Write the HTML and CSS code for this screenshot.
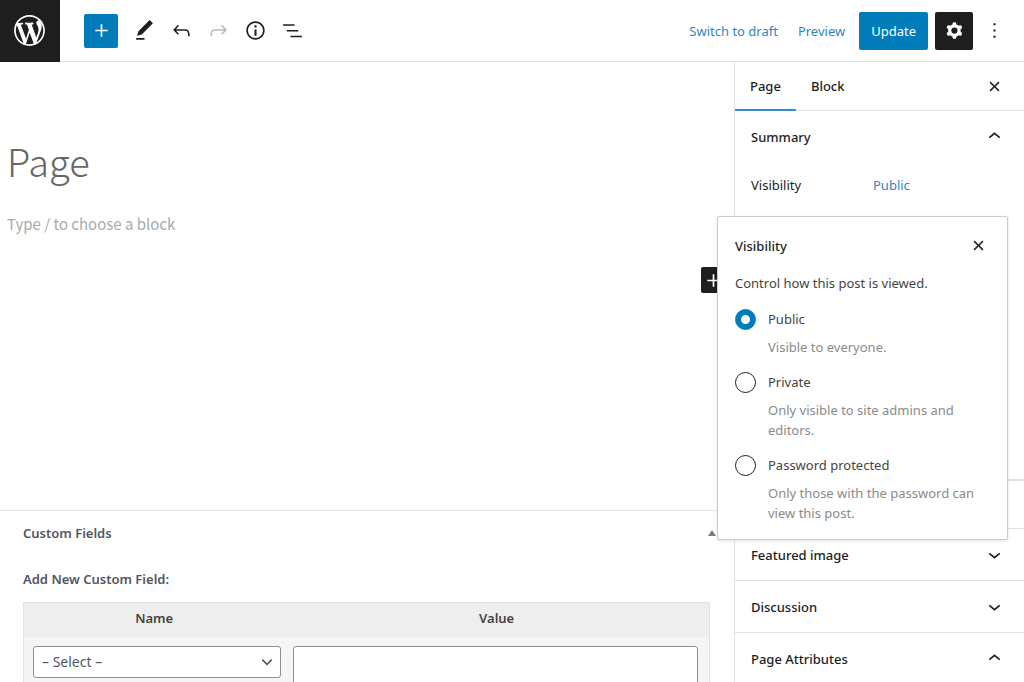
FILE: index.html
```
<!DOCTYPE html>
<html lang="en">
<head>
<meta charset="utf-8">
<meta name="viewport" content="width=device-width, initial-scale=1">
<title>Edit Page</title>
<link rel="stylesheet" href="styles.css">
</head>
<body>
<svg class="defs" aria-hidden="true">
  <symbol id="plus" viewBox="0 0 24 24"><path d="M18 11.2h-5.2V6h-1.6v5.2H6v1.6h5.2V18h1.6v-5.2H18z"/></symbol>
  <symbol id="close" viewBox="0 0 24 24"><path d="M12 13.06l3.712 3.713 1.061-1.06L13.061 12l3.712-3.712-1.06-1.06L12 10.938 8.288 7.227l-1.061 1.06L10.939 12l-3.712 3.712 1.06 1.061L12 13.061z"/></symbol>
  <symbol id="up" viewBox="0 0 24 24"><path d="M6.5 12.4L12 8l5.5 4.4-.9 1.2L12 10l-4.5 3.6-1-1.2z"/></symbol>
  <symbol id="down" viewBox="0 0 24 24"><path d="M17.5 11.6L12 16l-5.5-4.4.9-1.2L12 14l4.5-3.6 1 1.2z"/></symbol>
</svg>
<header class="topbar">
  <a class="logo" href="#" aria-label="View Pages"><svg viewBox="-2 -2 24 24"><path d="M20 10c0-5.51-4.49-10-10-10C4.48 0 0 4.49 0 10c0 5.52 4.48 10 10 10 5.51 0 10-4.48 10-10zM7.78 15.37L4.37 6.22c.55-.02 1.17-.08 1.17-.08.5-.06.44-1.13-.06-1.11 0 0-1.45.11-2.37.11-.18 0-.37 0-.58-.01C4.12 2.69 6.87 1.11 10 1.11c2.33 0 4.45.87 6.05 2.34-.68-.11-1.65.39-1.65 1.58 0 .74.45 1.36.9 2.1.35.61.55 1.36.55 2.46 0 1.49-1.4 5-1.4 5l-3.03-8.37c.54-.02.82-.17.82-.17.5-.05.44-1.25-.06-1.22 0 0-1.44.12-2.38.12-.87 0-2.33-.12-2.33-.12-.5-.03-.56 1.2-.06 1.22l.92.08 1.26 3.41zM17.41 10c.24-.64.74-1.87.43-4.25.7 1.29 1.05 2.71 1.05 4.25 0 3.29-1.73 6.24-4.4 7.78.97-2.59 1.94-5.2 2.92-7.78zM6.1 18.09C3.12 16.65 1.11 13.53 1.11 10c0-1.3.23-2.48.72-3.59C3.25 10.3 4.67 14.2 6.1 18.09zm4.03-6.63l2.58 6.98c-.86.29-1.76.45-2.71.45-.79 0-1.57-.11-2.29-.33.81-2.38 1.62-4.74 2.42-7.1z"/></svg></a>
  <div class="tools">
    <button class="tool tool-add" aria-label="Add block"><svg class="icon"><use href="#plus"/></svg></button>
    <button class="tool" aria-label="Tools"><svg class="icon" viewBox="0 0 24 24"><path d="M20.1 5.1L16.9 2 6.2 12.7l-1.3 4.4 4.5-1.3L20.1 5.1zM4 20.8h8v-1.5H4v1.5z"/></svg></button>
    <button class="tool" aria-label="Undo"><svg class="icon" viewBox="0 0 24 24"><path d="M18.3 11.7c-.6-.6-1.4-.9-2.3-.9H6.7l2.9-3.3-1.1-1-4.5 5L8.5 16l1-1-2.7-2.7H16c.5 0 .9.2 1.3.5 1 1 1 3.4 1 4.5v.3h1.5v-.2c0-1.5 0-4.3-1.5-5.7z"/></svg></button>
    <button class="tool tool-off" aria-label="Redo" disabled><svg class="icon" viewBox="0 0 24 24"><path d="M15.6 6.5l-1.1 1 2.9 3.3H8c-.9 0-1.7.3-2.3.9-1.4 1.5-1.4 4.2-1.4 5.6v.2h1.5v-.3c0-1.1 0-3.5 1-4.5.3-.3.7-.5 1.3-.5h9.2L14.5 15l1.1 1.1 4.6-4.6-4.6-5z"/></svg></button>
    <button class="tool" aria-label="Details"><svg class="icon" viewBox="0 0 24 24"><path d="M12 3.2c-4.8 0-8.8 3.9-8.8 8.8 0 4.8 3.9 8.8 8.8 8.8 4.8 0 8.8-3.9 8.8-8.8 0-4.8-4-8.8-8.8-8.8zm0 16c-4 0-7.2-3.3-7.2-7.2C4.8 8 8 4.8 12 4.8s7.2 3.3 7.2 7.2c0 4-3.2 7.2-7.2 7.2zM11 17h2v-6h-2v6zm0-8h2V7h-2v2z"/></svg></button>
    <button class="tool" aria-label="List view"><svg class="icon" viewBox="0 0 24 24"><path d="M3 6h11v1.5H3V6Zm3.5 5.5h11V13h-11v-1.5ZM21 17H10v1.5h11V17Z"/></svg></button>
  </div>
  <div class="actions">
    <button class="link">Switch to draft</button>
    <button class="link">Preview</button>
    <button class="update">Update</button>
    <button class="settings" aria-label="Settings"><svg class="icon" viewBox="0 0 24 24"><path fill-rule="evenodd" d="M10.289 4.836A1 1 0 0111.275 4h1.306a1 1 0 01.987.836l.244 1.466c.787.26 1.503.679 2.108 1.218l1.393-.522a1 1 0 011.216.437l.653 1.13a1 1 0 01-.23 1.273l-1.148.944a6.025 6.025 0 010 2.435l1.149.946a1 1 0 01.23 1.272l-.653 1.13a1 1 0 01-1.216.437l-1.394-.522c-.605.54-1.32.958-2.108 1.218l-.244 1.466a1 1 0 01-.987.836h-1.306a1 1 0 01-.986-.836l-.244-1.466a5.995 5.995 0 01-2.108-1.218l-1.394.522a1 1 0 01-1.217-.436l-.653-1.131a1 1 0 01.23-1.272l1.149-.946a6.026 6.026 0 010-2.435l-1.148-.944a1 1 0 01-.23-1.272l.653-1.131a1 1 0 011.217-.437l1.393.522a5.994 5.994 0 012.108-1.218l.244-1.466zM14.929 12a3 3 0 11-6 0 3 3 0 016 0z"/></svg></button>
    <button class="more" aria-label="Options"><svg class="icon" viewBox="0 0 24 24"><path d="M13 19h-2v-2h2v2zm0-6h-2v-2h2v2zm0-6h-2V5h2v2z"/></svg></button>
  </div>
</header>
<div class="workspace">
  <main class="editor">
    <section class="canvas">
      <h1 class="title">Page</h1>
      <p class="prompt">Type / to choose a block</p>
      <button class="inserter" aria-label="Add block"><svg class="icon"><use href="#plus"/></svg></button>
    </section>
    <section class="metabox">
      <div class="metabox-head">
        <h2 class="heading">Custom Fields</h2>
        <button class="toggle" aria-label="Toggle panel"><svg viewBox="0 0 8 6"><path d="M4 0l4 6H0z"/></svg></button>
      </div>
      <h3 class="heading">Add New Custom Field:</h3>
      <table class="fields">
        <thead><tr><th class="col-name" scope="col"><label for="key">Name</label></th><th scope="col"><label for="value">Value</label></th></tr></thead>
        <tbody><tr>
          <td><div class="picker"><select id="key" class="control"><option>– Select –</option></select><svg class="picker-arrow" viewBox="0 0 20 20"><path d="M4 7l6 6 6-6" /></svg></div></td>
          <td class="col-value"><textarea id="value" class="control area"></textarea></td>
        </tr></tbody>
      </table>
    </section>
  </main>
  <aside class="sidebar">
    <div class="tabs">
      <button class="tab tab-on">Page</button>
      <button class="tab">Block</button>
      <button class="close" aria-label="Close settings"><svg class="icon"><use href="#close"/></svg></button>
    </div>
    <section class="panel panel-summary">
      <button class="panel-toggle">Summary<svg class="icon"><use href="#up"/></svg></button>
      <div class="row">
        <span>Visibility</span>
        <button class="link">Public</button>
      </div>
      <div class="popover" role="dialog" aria-labelledby="pop-title">
        <div class="popover-head">
          <h2 class="popover-title" id="pop-title">Visibility</h2>
          <button class="close" aria-label="Close"><svg class="icon"><use href="#close"/></svg></button>
        </div>
        <fieldset class="choices">
          <legend>Control how this post is viewed.</legend>
          <div class="choice">
            <input type="radio" name="visibility" id="public" checked>
            <label for="public">Public</label>
            <p>Visible to everyone.</p>
          </div>
          <div class="choice">
            <input type="radio" name="visibility" id="private">
            <label for="private">Private</label>
            <p>Only visible to site admins and editors.</p>
          </div>
          <div class="choice">
            <input type="radio" name="visibility" id="password">
            <label for="password">Password protected</label>
            <p>Only those with the password can view this post.</p>
          </div>
        </fieldset>
      </div>
    </section>
    <section class="panel panel-blank"></section>
    <section class="panel"><button class="panel-toggle">Featured image<svg class="icon"><use href="#down"/></svg></button></section>
    <section class="panel"><button class="panel-toggle">Discussion<svg class="icon"><use href="#down"/></svg></button></section>
    <section class="panel"><button class="panel-toggle">Page Attributes<svg class="icon"><use href="#up"/></svg></button></section>
  </aside>
</div>
</body>
</html>
```

FILE: styles.css
```
* { box-sizing: border-box; }

body {
  margin: 0;
  height: 100vh;
  display: flex;
  flex-direction: column;
  overflow: hidden;
  background: #fff;
  color: #1e1e1e;
  font: 13px/20px "Noto Sans", "Open Sans", sans-serif;
}

button {
  display: flex;
  align-items: center;
  justify-content: center;
  padding: 0;
  border: 0;
  background: none;
  color: inherit;
  font: inherit;
}

h1, h2, h3, p { margin: 0; }

.defs { display: none; }
.icon { width: 25px; height: 25px; flex: none; fill: currentColor; }
.link { color: #2f86bd; }

/* Top bar */
.topbar {
  flex: none;
  display: flex;
  align-items: center;
  height: 62px;
  border-bottom: 1px solid #e0e0e0;
}
.logo {
  width: 60px;
  height: 62px;
  padding-right: 2px;
  display: flex;
  align-items: center;
  justify-content: center;
  background: #1e1e1e;
  fill: #fff;
}
.logo svg { width: 37px; height: 37px; }
.tools { display: flex; gap: 3px; margin-left: 24px; }
.tool { width: 34px; height: 34px; border-radius: 2px; }
.tool-add { background: #007cba; color: #fff; margin-right: 6px; }
.tool-off { color: #bbb; }
.actions { display: flex; align-items: center; margin-left: auto; }
.actions .link { margin-right: 20px; }
.actions .link + .link { margin-right: 14px; }
.update {
  height: 38px;
  padding: 0 12px;
  border-radius: 2px;
  background: #007cba;
  color: #fff;
}
.settings {
  width: 38px;
  height: 38px;
  margin-left: 7px;
  border-radius: 2px;
  background: #1e1e1e;
  color: #fff;
}
.more { margin: 0 17px 0 9px; }

/* Editor */
.workspace { flex: 1; min-height: 0; display: flex; }
.editor { flex: 1; min-width: 0; display: flex; flex-direction: column; overflow: hidden; }
.canvas { flex: none; height: 448px; padding: 72px 7px 0; }
.title {
  color: #666;
  font: 300 38px/54px "Noto Sans CJK SC", "Open Sans", sans-serif;
}
.prompt {
  margin-top: 24px;
  color: #aaa;
  font: 15px/24px "Noto Sans CJK SC", "Open Sans", sans-serif;
}
.inserter {
  width: 24px;
  height: 26px;
  margin: 31px 2px 0 auto;
  border-radius: 2px;
  background: #1e1e1e;
  color: #fff;
}

/* Custom fields */
.metabox { padding: 12px 24px 0 23px; border-top: 1px solid #e2e4e7; color: #444; }
.metabox-head { display: flex; justify-content: space-between; margin-bottom: 26px; }
.heading { color: #50575e; font-size: 13px; font-weight: 600; line-height: 20px; }
.toggle { margin-right: -6px; }
.toggle svg { width: 8px; height: 6px; fill: #787c82; }
.fields {
  width: 100%;
  margin-top: 13px;
  border: 1px solid #dfe1e3;
  border-spacing: 0;
  background: #f4f6f6;
}
.fields th { height: 34px; padding: 0 0 4px; background: #eee; font-weight: 600; }
.fields td { padding: 9px 3px 9px 9px; vertical-align: top; }
.fields .col-name { width: 38%; }
.fields .col-value { padding: 9px 11px 9px 9px; }
.picker { display: grid; align-items: center; }
.picker > * { grid-area: 1 / 1; }
.picker-arrow {
  width: 16px;
  height: 16px;
  margin-right: 6px;
  justify-self: end;
  fill: none;
  stroke: #50575e;
  stroke-width: 2;
  pointer-events: none;
}
.control {
  display: block;
  width: 100%;
  height: 32px;
  padding: 0 8px;
  border: 1px solid #8c8f94;
  border-radius: 3px;
  background: #fff;
  color: #50575e;
  font: inherit;
  font-size: 14px;
  appearance: none;
}
.area { height: 60px; resize: none; }

/* Sidebar */
.sidebar { flex: none; width: 290px; border-left: 1px solid #e0e0e0; overflow: hidden; }
.tabs { display: flex; height: 49px; border-bottom: 1px solid #e0e0e0; }
.tab { height: 48px; padding: 0 15px; font-weight: 500; }
.tab-on { height: 49px; border-bottom: 2px solid #2f93c8; }
.tabs .close { margin: 0 17px 0 auto; }
.panel { border-bottom: 1px solid #e0e0e0; }
.panel-toggle {
  width: 100%;
  height: 51px;
  padding: 0 17px 0 16px;
  justify-content: space-between;
  font-weight: 500;
}
.panel-summary { height: 370px; border-bottom-width: 2px; }
.panel-blank { height: 48px; }
.row {
  display: grid;
  grid-template-columns: 122px 1fr;
  justify-items: start;
  margin-top: 13px;
  padding: 0 16px;
}

/* Visibility popover */
.popover {
  position: absolute;
  top: 216px;
  right: 16px;
  width: 291px;
  padding: 16px 16px 16px 17px;
  border: 1px solid #ccc;
  border-radius: 2px;
  background: #fff;
  box-shadow: 0 1px 3px rgba(0, 0, 0, .12);
}
.popover-head {
  display: flex;
  align-items: center;
  justify-content: space-between;
  height: 25px;
  margin-bottom: 15px;
}
.popover-title { font-size: 13px; font-weight: 500; line-height: 20px; }
.choices { display: grid; gap: 15px; margin: 0; padding: 0; border: 0; color: #444; }
.choices legend { padding: 0; margin-bottom: 16px; }
.choice { display: grid; grid-template-columns: 21px 1fr; column-gap: 12px; row-gap: 7px; }
.choice p { grid-column: 2; color: #8a8a8a; }
.choice input {
  appearance: none;
  width: 21px;
  height: 21px;
  margin: 0;
  border: 1px solid #1e1e1e;
  border-radius: 50%;
}
.choice input:checked {
  border-color: #007cba;
  background: radial-gradient(circle, #fff 4px, #007cba 5px);
}
```
